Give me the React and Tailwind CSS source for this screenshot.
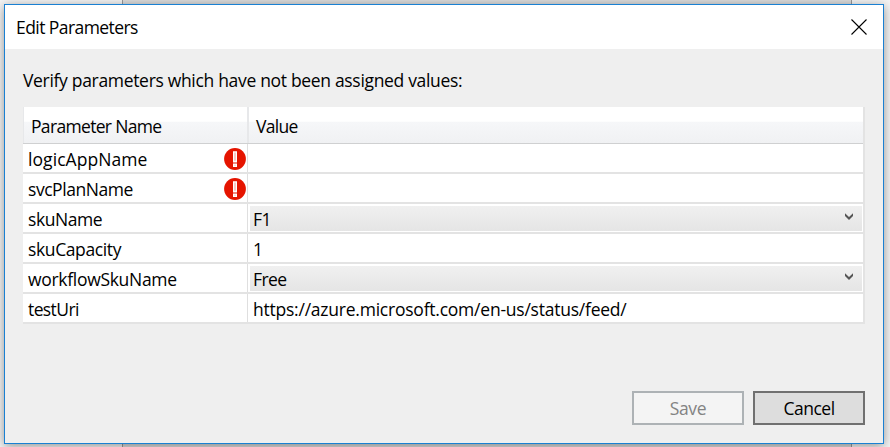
import React from "react";

const rows = [
  { name: "logicAppName", value: "", error: true, track: "tracking-[0.07px]" },
  { name: "svcPlanName", value: "", error: true, track: "tracking-[-0.45px]" },
  { name: "skuName", value: "F1", select: true, track: "tracking-[-0.45px]" },
  { name: "skuCapacity", value: "1", track: "tracking-[-0.38px]" },
  { name: "workflowSkuName", value: "Free", select: true, track: "tracking-[-0.3px]" },
  { name: "testUri", value: "https://azure.microsoft.com/en-us/status/feed/", track: "tracking-[-0.6px]" },
];

function ErrorIcon() {
  return (
    <svg width="22" height="22" viewBox="0 0 22 22" className="shrink-0">
      <circle cx="11" cy="11" r="10.9" fill="#e51400" />
      <path d="M9 3.2h4v11.2H9zM9 15.4h4v3.6H9z" fill="#fff" />
      <path d="M10.4 4.6h1.2v8.2h-1.2zM10.5 16.7h1v1h-1z" fill="#f4a79f" />
    </svg>
  );
}

function Chevron() {
  return (
    <svg width="8" height="7" viewBox="0 0 8 7" className="mr-[9px] mb-[4px] shrink-0">
      <path d="M0 0.2L4 3.9L8 0.2V3.1L4 6.9L0 3.1Z" fill="#555" />
    </svg>
  );
}

function Row({ row }) {
  return (
    <div className="flex h-[30px] border-b-2 border-[#e3e3e3]">
      <div className="flex w-[225px] items-center justify-between border-r border-[#dfdfdf] pl-[5px] pr-[1px] pt-[2px]">
        <span className={row.track}>{row.name}</span>
        {row.error && <ErrorIcon />}
      </div>
      <div className="flex flex-1 pl-[2px] pr-[1px] pt-[2px] pb-[1px]">
        {row.select ? (
          <div className="flex flex-1 items-center justify-between bg-linear-to-b from-[#f0f0f0] to-[#e5e5e5] pl-[3px]">
            <span className="tracking-[-0.6px]">{row.value}</span>
            <Chevron />
          </div>
        ) : (
          <div className="flex flex-1 items-center pl-[3px] tracking-[-0.23px]">{row.value}</div>
        )}
      </div>
    </div>
  );
}

export default function App() {
  return (
    <div className="relative h-[447px] w-[890px] overflow-hidden bg-[#f4f4f4] font-['Open_Sans','Noto_Sans',sans-serif] text-[17.5px] leading-[24px] text-black">
      <div className="absolute inset-y-0 left-[122px] w-[730px] border-x border-[#999] bg-[#dcdcdc]" />
      <div className="absolute left-[4px] top-[4px] flex h-[440px] w-[880px] flex-col border border-[#1a80d2] bg-[#efefef] shadow-[0_2px_10px_rgba(0,0,0,0.4)]">
        <header className="flex h-[44px] items-center justify-between bg-white pl-[11px] pr-[16px]">
          <h1 className="tracking-[-0.57px]">Edit Parameters</h1>
          <svg width="16" height="16" viewBox="0 0 16 16" fill="none" stroke="#000" strokeWidth="1.1">
            <path d="M0.5 0.5L15.5 15.5M15.5 0.5L0.5 15.5" />
          </svg>
        </header>
        <main className="flex flex-1 flex-col px-[18px] pt-[19px] pb-[18px]">
          <p className="h-[39px] tracking-[-0.32px]">Verify parameters which have not been assigned values:</p>
          <div className="w-[842px] border-r-2 border-[#e3e3e3] bg-white">
            <div className="flex h-[37px] border-b border-[#cfd0d1] bg-[linear-gradient(to_bottom,#fff_0,#fff_40%,#f6f7f9_41%,#f0f1f3_100%)]">
              <div className="flex w-[226px] items-center border-l border-r-2 border-[#e7e8ea] pl-[7px] pt-[2px]">
                <span className="tracking-[-0.67px]">Parameter Name</span>
              </div>
              <div className="flex items-center pl-[7px] pt-[2px] tracking-[-0.7px]">Value</div>
            </div>
            {rows.map((row) => (
              <Row key={row.name} row={row} />
            ))}
          </div>
          <footer className="mt-auto flex justify-end gap-[9px]">
            <button className="h-[34px] w-[112px] border-2 border-[#adb2b5] bg-[#f4f4f4] tracking-[-0.3px] text-[#838383]">Save</button>
            <button className="h-[34px] w-[112px] border-2 border-[#707070] bg-[#ddd] tracking-[-0.5px]">Cancel</button>
          </footer>
        </main>
      </div>
    </div>
  );
}
